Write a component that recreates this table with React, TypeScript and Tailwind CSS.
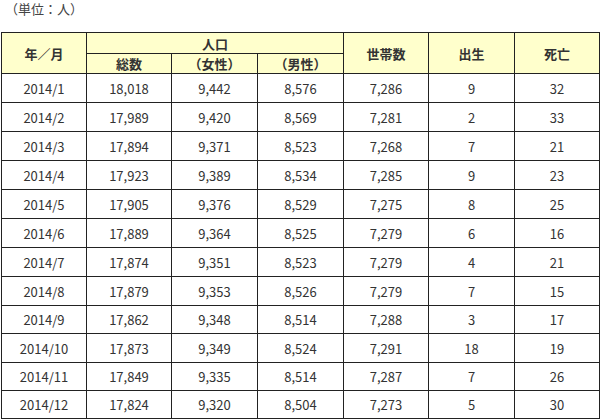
import React from "react";

const rows: [string, string, string, string, string, string, string][] = [
  ["2014/1", "18,018", "9,442", "8,576", "7,286", "9", "32"],
  ["2014/2", "17,989", "9,420", "8,569", "7,281", "2", "33"],
  ["2014/3", "17,894", "9,371", "8,523", "7,268", "7", "21"],
  ["2014/4", "17,923", "9,389", "8,534", "7,285", "9", "23"],
  ["2014/5", "17,905", "9,376", "8,529", "7,275", "8", "25"],
  ["2014/6", "17,889", "9,364", "8,525", "7,279", "6", "16"],
  ["2014/7", "17,874", "9,351", "8,523", "7,279", "4", "21"],
  ["2014/8", "17,879", "9,353", "8,526", "7,279", "7", "15"],
  ["2014/9", "17,862", "9,348", "8,514", "7,288", "3", "17"],
  ["2014/10", "17,873", "9,349", "8,524", "7,291", "18", "19"],
  ["2014/11", "17,849", "9,335", "8,514", "7,287", "7", "26"],
  ["2014/12", "17,824", "9,320", "8,504", "7,273", "5", "30"],
];

const heights = [29, 29, 29, 29, 29, 29, 29, 29, 28, 29, 28, 28];

export default function App() {
  return (
    <div
      className="w-[600px] h-[420px] bg-white overflow-hidden text-[#333]"
      style={{ fontFamily: '"Noto Sans CJK JP", "Noto Sans", sans-serif' }}
    >
      <div className="h-[32px] pl-[5px] pt-[1px] text-[13px] leading-[16px] text-[#444]">
        （単位：人）
      </div>
      <table className="ml-px w-[598px] table-fixed border-collapse text-[13px] leading-none">
        <colgroup>
          <col className="w-[85px]" />
          <col className="w-[85px]" />
          <col className="w-[86px]" />
          <col className="w-[86px]" />
          <col className="w-[85px]" />
          <col className="w-[86px]" />
          <col className="w-[85px]" />
        </colgroup>
        <thead>
          <tr className="h-[21px] bg-[#ffffcc]">
            <th rowSpan={2} className="border border-[#222] font-bold">年／月</th>
            <th colSpan={3} className="border border-[#222] font-bold">人口</th>
            <th rowSpan={2} className="border border-[#222] font-bold">世帯数</th>
            <th rowSpan={2} className="border border-[#222] font-bold">出生</th>
            <th rowSpan={2} className="border border-[#222] font-bold">死亡</th>
          </tr>
          <tr className="h-[20px] bg-[#ffffcc]">
            <th className="border border-[#222] font-bold">総数</th>
            <th className="border border-[#222] font-bold">（女性）</th>
            <th className="border border-[#222] font-bold">（男性）</th>
          </tr>
        </thead>
        <tbody>
          {rows.map((r, i) => (
            <tr key={i} style={{ height: heights[i] }}>
              {r.map((c, j) => (
                <td key={j} className="border border-[#222] text-center font-normal">
                  {c}
                </td>
              ))}
            </tr>
          ))}
        </tbody>
      </table>
    </div>
  );
}
